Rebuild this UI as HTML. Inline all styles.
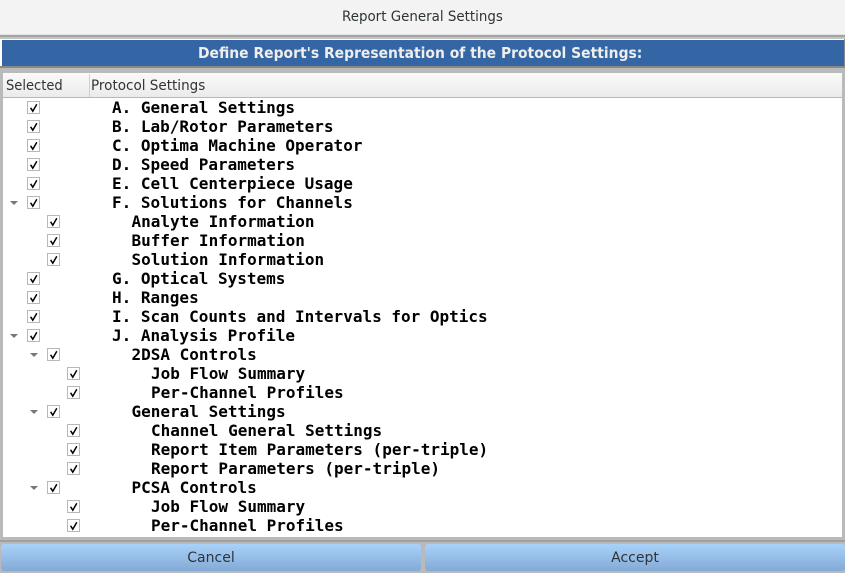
<!DOCTYPE html>
<html><head><meta charset="utf-8"><style>
html,body{margin:0;padding:0;width:845px;height:573px;overflow:hidden;background:#bababa}
div,span{position:absolute;box-sizing:border-box}
.t{white-space:pre;font-family:"DejaVu Sans",sans-serif;font-size:14px;color:#2e3436;line-height:20px;transform-origin:0 50%}
.r{white-space:pre;font-family:"DejaVu Sans Mono",monospace;font-weight:bold;font-size:16px;color:#000;line-height:19px;height:19px;margin-top:0}
.c{width:13px;height:13px;background:#fff;border:1px solid #b8b8b8}
.c svg{position:absolute;left:0;top:0}
.a{width:0;height:0;border-left:4px solid transparent;border-right:4px solid transparent;border-top:4px solid #777}
.b{top:544px;height:27px;border-radius:3px;background:linear-gradient(#a8d2fa,#84aad6);text-align:center;line-height:28px;font-family:"DejaVu Sans",sans-serif;font-size:14px;color:#2e3436}
</style></head><body>
<div style="left:0;top:0;width:845px;height:35px;background:#f3f3f3;border-bottom:1px solid #e4e4e4"></div>
<div style="left:0;top:35px;width:845px;height:2px;background:#a4a4a0"></div>
<div class="t" style="left:342px;top:7px;transform:scaleX(.958)">Report General Settings</div>
<div style="left:0;top:37px;width:845px;height:2px;background:#c4c4c4"></div>
<div style="left:0;top:39px;width:845px;height:27px;background:#fff"></div>
<div style="left:2px;top:40px;width:842px;height:26px;background:#3465a4"></div>
<div style="left:844px;top:39px;width:1px;height:27px;background:#888"></div>
<div style="left:0;top:66px;width:845px;height:2px;background:#888"></div>
<div class="t" style="left:198px;top:43px;font-weight:bold;font-size:15px;color:#eeeeec;transform:scaleX(.927)">Define Report's Representation of the Protocol Settings:</div>
<div style="left:3px;top:73px;width:839px;height:25px;background:linear-gradient(#fafafa,#ebebeb);border-bottom:1px solid #b8b8b8"></div>
<div style="left:89px;top:74px;width:1px;height:23px;background:#d0d0d0"></div>
<div class="t" style="left:6px;top:76px;color:#333;transform:scaleX(.935)">Selected</div>
<div class="t" style="left:91px;top:76px;color:#333;transform:scaleX(.966)">Protocol Settings</div>
<div style="left:3px;top:98px;width:839px;height:439px;background:#fff;overflow:hidden">
<div id="x" style="left:-3px;top:-98px;width:842px;height:537px;overflow:hidden">
<div class="r" style="left:112px;top:98px">A. General Settings</div>
<div class="r" style="left:112px;top:117px">B. Lab/Rotor Parameters</div>
<div class="r" style="left:112px;top:136px">C. Optima Machine Operator</div>
<div class="r" style="left:112px;top:155px">D. Speed Parameters</div>
<div class="r" style="left:112px;top:174px">E. Cell Centerpiece Usage</div>
<div class="r" style="left:112px;top:193px">F. Solutions for Channels</div>
<div class="r" style="left:131.5px;top:212px">Analyte Information</div>
<div class="r" style="left:131.5px;top:231px">Buffer Information</div>
<div class="r" style="left:131.5px;top:250px">Solution Information</div>
<div class="r" style="left:112px;top:269px">G. Optical Systems</div>
<div class="r" style="left:112px;top:288px">H. Ranges</div>
<div class="r" style="left:112px;top:307px">I. Scan Counts and Intervals for Optics</div>
<div class="r" style="left:112px;top:326px">J. Analysis Profile</div>
<div class="r" style="left:131.5px;top:345px">2DSA Controls</div>
<div class="r" style="left:151px;top:364px">Job Flow Summary</div>
<div class="r" style="left:151px;top:383px">Per-Channel Profiles</div>
<div class="r" style="left:131.5px;top:402px">General Settings</div>
<div class="r" style="left:151px;top:421px">Channel General Settings</div>
<div class="r" style="left:151px;top:440px">Report Item Parameters (per-triple)</div>
<div class="r" style="left:151px;top:459px">Report Parameters (per-triple)</div>
<div class="r" style="left:131.5px;top:478px">PCSA Controls</div>
<div class="r" style="left:151px;top:497px">Job Flow Summary</div>
<div class="r" style="left:151px;top:516px">Per-Channel Profiles</div>

<div class="a" style="left:10px;top:201px"></div>
<div class="a" style="left:10px;top:334px"></div>
<div class="a" style="left:30px;top:353px"></div>
<div class="a" style="left:30px;top:410px"></div>
<div class="a" style="left:30px;top:486px"></div>

<div class="c" style="left:27px;top:101px"><svg width="11" height="11"><path d="M2.6 5.8L4.8 9.2L8.8 2.2" fill="none" stroke="#000" stroke-width="1.5"/></svg></div>
<div class="c" style="left:27px;top:120px"><svg width="11" height="11"><path d="M2.6 5.8L4.8 9.2L8.8 2.2" fill="none" stroke="#000" stroke-width="1.5"/></svg></div>
<div class="c" style="left:27px;top:139px"><svg width="11" height="11"><path d="M2.6 5.8L4.8 9.2L8.8 2.2" fill="none" stroke="#000" stroke-width="1.5"/></svg></div>
<div class="c" style="left:27px;top:158px"><svg width="11" height="11"><path d="M2.6 5.8L4.8 9.2L8.8 2.2" fill="none" stroke="#000" stroke-width="1.5"/></svg></div>
<div class="c" style="left:27px;top:177px"><svg width="11" height="11"><path d="M2.6 5.8L4.8 9.2L8.8 2.2" fill="none" stroke="#000" stroke-width="1.5"/></svg></div>
<div class="c" style="left:27px;top:196px"><svg width="11" height="11"><path d="M2.6 5.8L4.8 9.2L8.8 2.2" fill="none" stroke="#000" stroke-width="1.5"/></svg></div>
<div class="c" style="left:47px;top:215px"><svg width="11" height="11"><path d="M2.6 5.8L4.8 9.2L8.8 2.2" fill="none" stroke="#000" stroke-width="1.5"/></svg></div>
<div class="c" style="left:47px;top:234px"><svg width="11" height="11"><path d="M2.6 5.8L4.8 9.2L8.8 2.2" fill="none" stroke="#000" stroke-width="1.5"/></svg></div>
<div class="c" style="left:47px;top:253px"><svg width="11" height="11"><path d="M2.6 5.8L4.8 9.2L8.8 2.2" fill="none" stroke="#000" stroke-width="1.5"/></svg></div>
<div class="c" style="left:27px;top:272px"><svg width="11" height="11"><path d="M2.6 5.8L4.8 9.2L8.8 2.2" fill="none" stroke="#000" stroke-width="1.5"/></svg></div>
<div class="c" style="left:27px;top:291px"><svg width="11" height="11"><path d="M2.6 5.8L4.8 9.2L8.8 2.2" fill="none" stroke="#000" stroke-width="1.5"/></svg></div>
<div class="c" style="left:27px;top:310px"><svg width="11" height="11"><path d="M2.6 5.8L4.8 9.2L8.8 2.2" fill="none" stroke="#000" stroke-width="1.5"/></svg></div>
<div class="c" style="left:27px;top:329px"><svg width="11" height="11"><path d="M2.6 5.8L4.8 9.2L8.8 2.2" fill="none" stroke="#000" stroke-width="1.5"/></svg></div>
<div class="c" style="left:47px;top:348px"><svg width="11" height="11"><path d="M2.6 5.8L4.8 9.2L8.8 2.2" fill="none" stroke="#000" stroke-width="1.5"/></svg></div>
<div class="c" style="left:67px;top:367px"><svg width="11" height="11"><path d="M2.6 5.8L4.8 9.2L8.8 2.2" fill="none" stroke="#000" stroke-width="1.5"/></svg></div>
<div class="c" style="left:67px;top:386px"><svg width="11" height="11"><path d="M2.6 5.8L4.8 9.2L8.8 2.2" fill="none" stroke="#000" stroke-width="1.5"/></svg></div>
<div class="c" style="left:47px;top:405px"><svg width="11" height="11"><path d="M2.6 5.8L4.8 9.2L8.8 2.2" fill="none" stroke="#000" stroke-width="1.5"/></svg></div>
<div class="c" style="left:67px;top:424px"><svg width="11" height="11"><path d="M2.6 5.8L4.8 9.2L8.8 2.2" fill="none" stroke="#000" stroke-width="1.5"/></svg></div>
<div class="c" style="left:67px;top:443px"><svg width="11" height="11"><path d="M2.6 5.8L4.8 9.2L8.8 2.2" fill="none" stroke="#000" stroke-width="1.5"/></svg></div>
<div class="c" style="left:67px;top:462px"><svg width="11" height="11"><path d="M2.6 5.8L4.8 9.2L8.8 2.2" fill="none" stroke="#000" stroke-width="1.5"/></svg></div>
<div class="c" style="left:47px;top:481px"><svg width="11" height="11"><path d="M2.6 5.8L4.8 9.2L8.8 2.2" fill="none" stroke="#000" stroke-width="1.5"/></svg></div>
<div class="c" style="left:67px;top:500px"><svg width="11" height="11"><path d="M2.6 5.8L4.8 9.2L8.8 2.2" fill="none" stroke="#000" stroke-width="1.5"/></svg></div>
<div class="c" style="left:67px;top:519px"><svg width="11" height="11"><path d="M2.6 5.8L4.8 9.2L8.8 2.2" fill="none" stroke="#000" stroke-width="1.5"/></svg></div>
</div></div>
<div style="left:0;top:540px;width:845px;height:2px;background:#a0a0a0"></div>
<div class="b" style="left:1px;width:420px">Cancel</div>
<div class="b" style="left:425px;width:420px">Accept</div>
</body></html>
